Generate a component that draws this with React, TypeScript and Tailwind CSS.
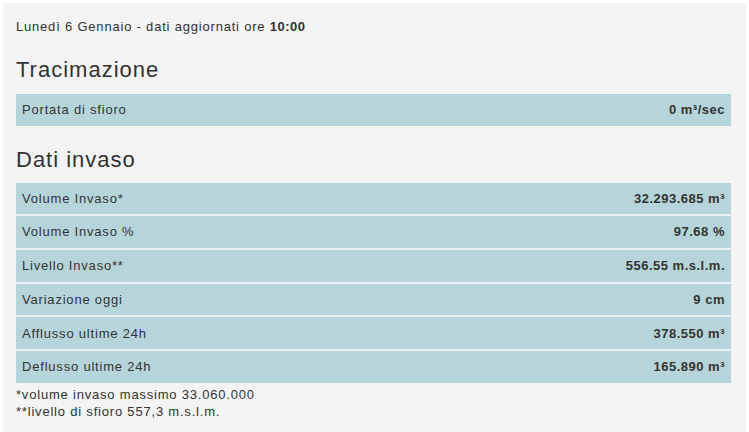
import React from "react"

// --- Data ---
const TRACIMAZIONE = [{ label: "Portata di sfioro", value: "0 m³/sec" }]

const DATI_INVASO = [
  { label: "Volume Invaso*", value: "32.293.685 m³" },
  { label: "Volume Invaso %", value: "97.68 %" },
  { label: "Livello Invaso**", value: "556.55 m.s.l.m." },
  { label: "Variazione oggi", value: "9 cm" },
  { label: "Afflusso ultime 24h", value: "378.550 m³" },
  { label: "Deflusso ultime 24h", value: "165.890 m³" },
]

type Row = { label: string; value: string }

const DataTable = ({ rows }: { rows: Row[] }) => (
  <div className="flex flex-col">
    {rows.map((row, i) => (
      <div
        key={row.label}
        className={`box-content flex items-center justify-between h-[31.7px] bg-[#b6d5da] px-[6px] ${
          i > 0 ? "border-t-2 border-[#e6f0f0]" : ""
        }`}
      >
        <span>{row.label}</span>
        <span className="font-bold tracking-[0.5px]">{row.value}</span>
      </div>
    ))}
  </div>
)

export default function App() {
  return (
    <div className="w-[749px] h-[432px] bg-white overflow-hidden pt-[3px] pl-[3px] font-['Liberation_Sans',Arial,sans-serif] text-[13px] tracking-[0.8px] text-[#333]">
      <div className="w-[743px] h-[429px] bg-[#f4f4f4] pl-[13px] pr-[15px] pt-[15px]">
        {/* Update info */}
        <p className="leading-[18px]">
          Lunedì 6 Gennaio - dati aggiornati ore <b className="tracking-[0.5px]">10:00</b>
        </p>

        {/* --- Tracimazione --- */}
        <h2 className="mt-[21px] mb-[11px] text-[22px] leading-[26px] tracking-[1px]">Tracimazione</h2>
        <DataTable rows={TRACIMAZIONE} />

        {/* --- Dati invaso --- */}
        <h2 className="mt-[21px] mb-[10px] text-[22px] leading-[26px] tracking-[1px]">Dati invaso</h2>
        <DataTable rows={DATI_INVASO} />

        {/* Footnotes */}
        <div className="mt-[3px] leading-[17px]">
          <p>*volume invaso massimo 33.060.000</p>
          <p>**livello di sfioro 557,3 m.s.l.m.</p>
        </div>
      </div>
    </div>
  )
}
